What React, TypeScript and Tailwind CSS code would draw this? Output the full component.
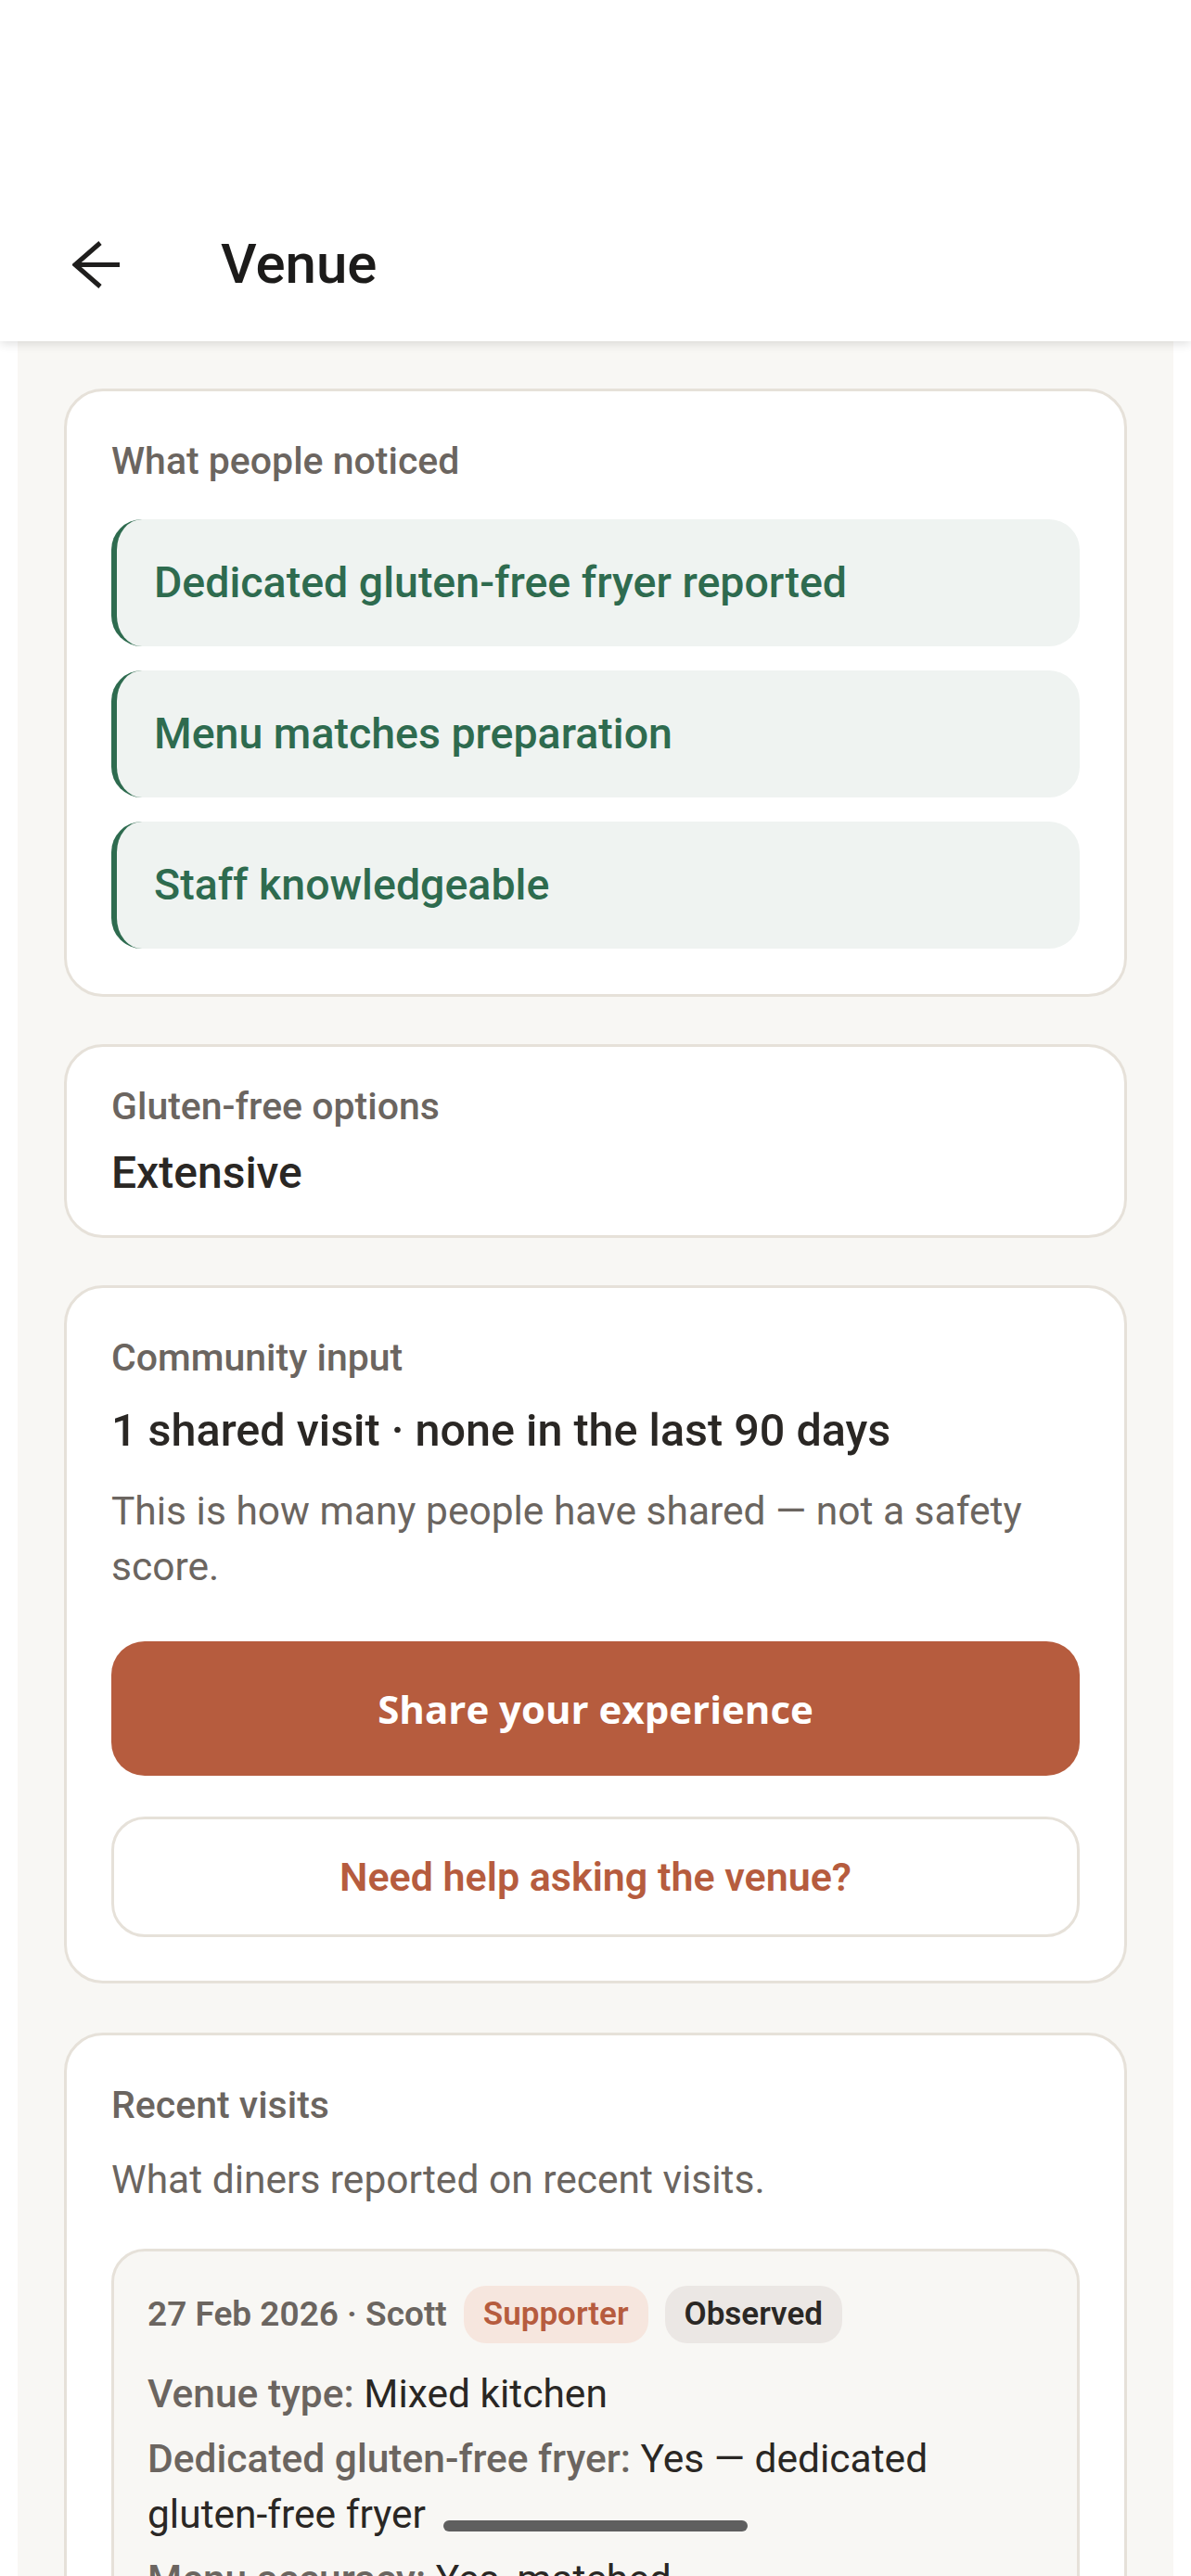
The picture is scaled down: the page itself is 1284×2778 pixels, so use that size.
import React from "react";

const notices = [
  "Dedicated gluten-free fryer reported",
  "Menu matches preparation",
  "Staff knowledgeable",
];

const visitLines: [string, string][] = [
  ["Venue type:", "Mixed kitchen"],
  ["Dedicated gluten-free fryer:", "Yes — dedicated gluten-free fryer"],
  ["Menu accuracy:", "Yes, matched"],
  ["Staff knowledge:", "Confident answers"],
];

function BackArrow() {
  return (
    <svg width="52" height="51" viewBox="0 0 52 51" fill="none" aria-hidden>
      <path d="M30 2 L3 25.5 L30 49" stroke="#1f1e1d" strokeWidth="5" />
      <path d="M4 25.5 H51" stroke="#1f1e1d" strokeWidth="5" />
    </svg>
  );
}

export default function App() {
  return (
    <div className="relative h-[2778px] overflow-hidden bg-white font-['Roboto',sans-serif]">
      {/* Top bar */}
      <header className="relative z-10 bg-white pt-[220px] pb-[18px] shadow-[0_3px_10px_rgba(0,0,0,0.12)]">
        <div className="flex h-[130px] items-center pl-[78px]">
          <button aria-label="Back" className="flex items-center">
            <BackArrow />
          </button>
          <h1 className="ml-[108px] text-[60px] font-medium leading-none text-[#1c1b1a]">
            Venue
          </h1>
        </div>
      </header>

      <main className="mx-[19px] flex min-h-full flex-col gap-[51px] bg-[#f8f7f4] px-[50px] pt-[51px] pb-[200px]">
        {/* What people noticed */}
        <section className="rounded-[42px] border-[3px] border-[#e6e1d9] bg-white px-[48px] pt-[48px] pb-[49px]">
          <h2 className="text-[41px] font-medium leading-[54px] text-[#6b6560]">
            What people noticed
          </h2>
          <ul className="mt-[36px] flex flex-col gap-[26px]">
            {notices.map((n) => (
              <li
                key={n}
                className="flex h-[137px] items-center rounded-[33px] border-l-[6px] border-[#2e6b4f] bg-[#eff3f1] pl-[40px] text-[46.5px] font-medium text-[#2e6b4f]"
              >
                {n}
              </li>
            ))}
          </ul>
        </section>

        {/* Gluten-free options */}
        <section className="rounded-[42px] border-[3px] border-[#e6e1d9] bg-white px-[48px] py-[37px]">
          <h2 className="text-[41px] font-medium leading-[54px] text-[#6b6560]">
            Gluten-free options
          </h2>
          <p className="mt-[15px] text-[48px] font-medium leading-[60px] text-[#2a2724]">
            Extensive
          </p>
        </section>

        {/* Community input */}
        <section className="rounded-[42px] border-[3px] border-[#e6e1d9] bg-white px-[48px] pt-[48px] pb-[47px]">
          <h2 className="text-[41px] font-medium leading-[54px] text-[#6b6560]">
            Community input
          </h2>
          <p className="mt-[19px] text-[48.5px] font-medium leading-[66px] text-[#2a2724]">
            1 shared visit · none in the last 90 days
          </p>
          <p className="mt-[24px] text-[42.5px] leading-[60px] text-[#6b6560]">
            This is how many people have shared — not a safety score.
          </p>
          <button className="mt-[50px] flex h-[145px] w-full items-center justify-center rounded-[36px] bg-[#b65c3e] font-['Open_Sans',sans-serif] text-[42px] font-bold text-white">
            Share your experience
          </button>
          <button className="mt-[44px] flex h-[130px] w-full items-center justify-center rounded-[36px] border-[3px] border-[#e6e1d9] bg-white text-[43px] font-semibold text-[#b65c3e]">
            Need help asking the venue?
          </button>
        </section>

        {/* Recent visits */}
        <section className="mt-[2px] rounded-[42px] border-[3px] border-[#e6e1d9] bg-white px-[48px] pt-[48px] pb-[48px]">
          <h2 className="text-[41px] font-medium leading-[54px] text-[#6b6560]">
            Recent visits
          </h2>
          <p className="mt-[24px] text-[42.5px] leading-[60px] text-[#6b6560]">
            What diners reported on recent visits.
          </p>
          <article className="mt-[44px] rounded-[36px] border-[3px] border-[#e6e1d9] bg-[#f8f7f4] px-[36px] pt-[37px] pb-[40px]">
            <div className="flex h-[62px] items-center gap-[18px]">
              <span className="text-[37px] font-semibold text-[#6b6560]">
                27 Feb 2026 · Scott
              </span>
              <span className="flex h-[62px] items-center rounded-[24px] bg-[#f6e6de] px-[21px] text-[35px] font-semibold text-[#b65c3e]">
                Supporter
              </span>
              <span className="flex h-[62px] items-center rounded-[24px] bg-[#ebe7e4] px-[21px] text-[35px] font-semibold text-[#2a2724]">
                Observed
              </span>
            </div>
            <div className="mt-[25px] flex flex-col gap-[10px]">
              {visitLines.map(([label, value]) => (
                <p key={label} className="text-[42.5px] leading-[60px] text-[#2a2724]">
                  <span className="font-medium text-[#6b6560]">{label}</span> {value}
                </p>
              ))}
            </div>
          </article>
        </section>
      </main>

      {/* gesture handle */}
      <div className="absolute top-[2718px] left-1/2 h-[12px] w-[328px] -translate-x-1/2 rounded-full bg-[#5f5f5f]" />
    </div>
  );
}
